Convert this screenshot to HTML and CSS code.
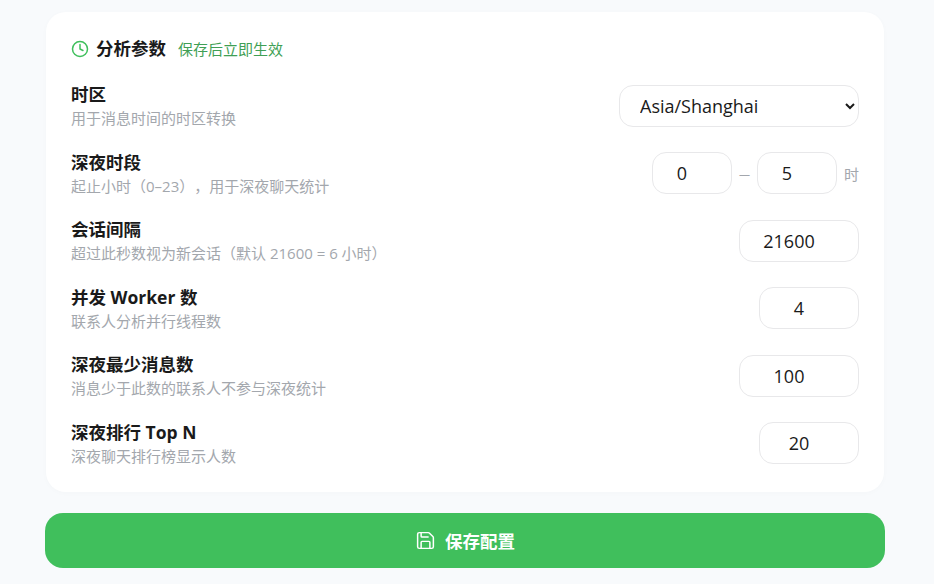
FILE: index.html
```html
<!DOCTYPE html>
<html lang="zh-CN">
<head>
  <meta charset="UTF-8">
  <title>分析参数</title>
  <link rel="stylesheet" href="styles.css">
</head>
<body>
  <div class="page">
    <section class="card">
      <div class="card-head">
        <svg class="head-icon" width="18" height="18" viewBox="0 0 24 24" fill="none" stroke="#3fbf5c" stroke-width="2" stroke-linecap="round" stroke-linejoin="round">
          <circle cx="12" cy="12" r="10"></circle>
          <path d="M12 6v6l4 2"></path>
        </svg>
        <h2>分析参数</h2>
        <span class="hint">保存后立即生效</span>
      </div>

      <div class="row">
        <div class="info">
          <p class="name">时区</p>
          <p class="desc">用于消息时间的时区转换</p>
        </div>
        <select class="field select">
          <option>Asia/Shanghai</option>
        </select>
      </div>

      <div class="row">
        <div class="info">
          <p class="name">深夜时段</p>
          <p class="desc">起止小时（0–23），用于深夜聊天统计</p>
        </div>
        <div class="range">
          <input class="field hour" type="number" value="0">
          <span class="dash">—</span>
          <input class="field hour" type="number" value="5">
          <span class="unit">时</span>
        </div>
      </div>

      <div class="row">
        <div class="info">
          <p class="name">会话间隔</p>
          <p class="desc">超过此秒数视为新会话（默认 21600 = 6 小时）</p>
        </div>
        <input class="field wide" type="number" value="21600">
      </div>

      <div class="row">
        <div class="info">
          <p class="name">并发 Worker 数</p>
          <p class="desc">联系人分析并行线程数</p>
        </div>
        <input class="field narrow" type="number" value="4">
      </div>

      <div class="row">
        <div class="info">
          <p class="name">深夜最少消息数</p>
          <p class="desc">消息少于此数的联系人不参与深夜统计</p>
        </div>
        <input class="field wide" type="number" value="100">
      </div>

      <div class="row">
        <div class="info">
          <p class="name">深夜排行 Top N</p>
          <p class="desc">深夜聊天排行榜显示人数</p>
        </div>
        <input class="field narrow" type="number" value="20">
      </div>
    </section>

    <button class="save">
      <svg width="21" height="21" viewBox="0 0 24 24" fill="none" stroke="#fff" stroke-width="1.7" stroke-linecap="round" stroke-linejoin="round">
        <path d="M15.2 3a2 2 0 0 1 1.4.6l3.8 3.8a2 2 0 0 1 .6 1.4V19a2 2 0 0 1-2 2H5a2 2 0 0 1-2-2V5a2 2 0 0 1 2-2z"></path>
        <path d="M17 21v-7a1 1 0 0 0-1-1H8a1 1 0 0 0-1 1v7"></path>
        <path d="M7 3v4a1 1 0 0 0 1 1h7"></path>
      </svg>
      保存配置
    </button>
  </div>
</body>
</html>
```

FILE: styles.css
```css
* {
  box-sizing: border-box;
}

body {
  margin: 0;
  height: 584px;
  overflow: hidden;
  background: #f8fafc;
  font-family: "Open Sans", "Noto Sans CJK SC", sans-serif;
  color: #1a1a1a;
  text-spacing-trim: space-all;
}

.page {
  padding: 12px 49px 0 45px;
}

.card {
  margin: 0 1px;
  height: 480px;
  padding: 24px 25px 0;
  background: #fff;
  border-radius: 20px;
  box-shadow: 0 1px 6px rgba(0, 0, 0, 0.02);
}

.card-head {
  display: flex;
  align-items: center;
  height: 24px;
  margin-bottom: 15.5px;
}

.head-icon {
  margin: 2px 7px 0 0;
}

h2 {
  margin: 0 12px 0 0;
  font-size: 17.5px;
  font-weight: 700;
  line-height: 24px;
}

.hint {
  font-size: 15px;
  color: #3f9f55;
}

.row {
  display: flex;
  align-items: center;
  justify-content: space-between;
  height: 67.5px;
  padding-bottom: 7px;
}

.info {
  padding-top: 1px;
}

.name {
  margin: 0;
  font-size: 17.5px;
  font-weight: 700;
  line-height: 24px;
}

.desc {
  margin: 0;
  font-size: 15px;
  line-height: 24px;
  color: #a3a7ad;
}

.field {
  height: 42px;
  border: 1px solid #e8e8ea;
  border-radius: 14px;
  background: #fff;
  font-family: inherit;
  font-size: 18px;
  color: #1a1a1a;
  text-align: center;
  outline: none;
  appearance: textfield;
}

.field::-webkit-inner-spin-button {
  display: none;
}

.select {
  width: 240px;
  padding: 0 11px 0 16px;
  text-align: left;
  appearance: auto;
}

.range {
  display: flex;
  align-items: center;
}

.hour,
.wide,
.narrow {
  padding: 0 20px 0 0;
}

.hour {
  width: 80px;
}

.dash {
  width: 25px;
  text-align: center;
  font-size: 11px;
  color: #a3a7ad;
}

.unit {
  margin-left: 7px;
  font-size: 15px;
  color: #a3a7ad;
}

.wide {
  width: 120px;
}

.narrow {
  width: 100px;
}

.save {
  display: flex;
  align-items: center;
  justify-content: center;
  gap: 9px;
  width: 840px;
  height: 55px;
  margin-top: 21px;
  border: none;
  border-radius: 18px;
  background: #40bf5c;
  color: #fff;
  font-family: inherit;
  font-size: 17.5px;
  font-weight: 700;
}
```
